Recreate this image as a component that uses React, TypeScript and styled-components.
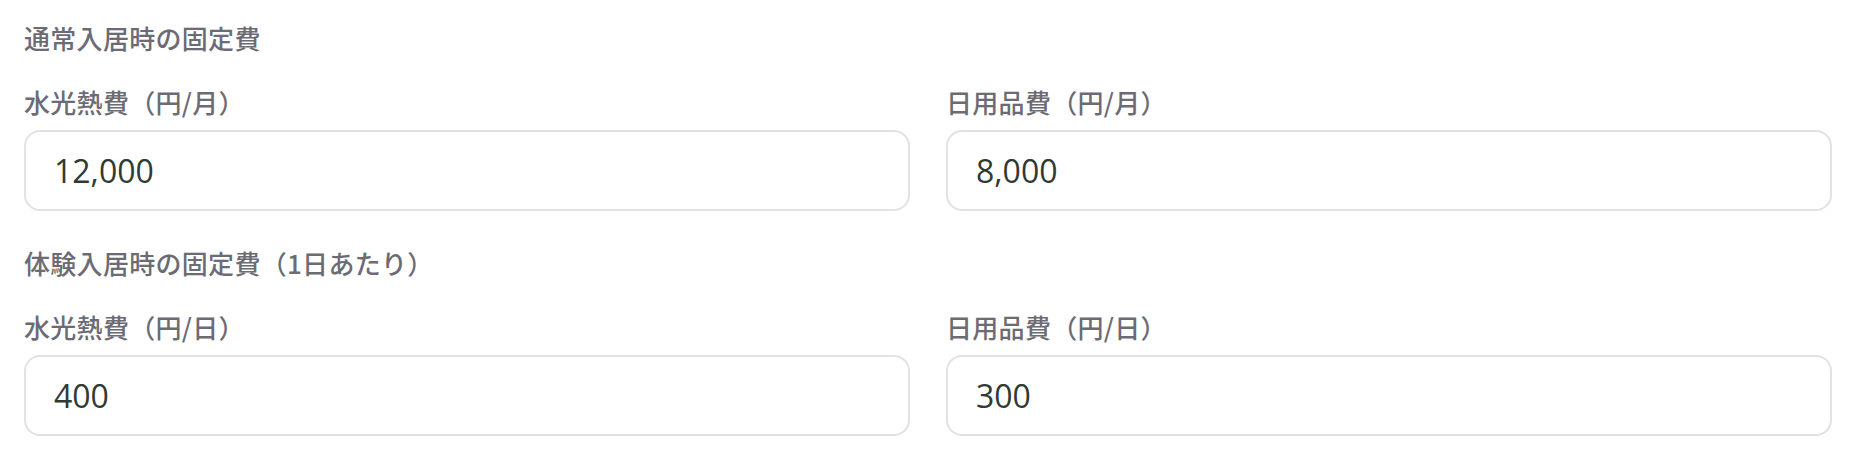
import React from 'react'
import styled, {createGlobalStyle} from 'styled-components'

const sections = [
    {
        title: '通常入居時の固定費',
        fields: [
            {label: '水光熱費（円/月）', value: '12,000'},
            {label: '日用品費（円/月）', value: '8,000'},
        ],
    },
    {
        title: '体験入居時の固定費（1日あたり）',
        fields: [
            {label: '水光熱費（円/日）', value: '400'},
            {label: '日用品費（円/日）', value: '300'},
        ],
    },
]

export default function App() {
    return (
        <>
            <GlobalL/>
            <PageL>
                {sections.map((s) => (
                    <SectionL key={s.title}>
                        <TitleL>{s.title}</TitleL>
                        <RowL>
                            {s.fields.map((f) => (
                                <FieldL key={f.label}>
                                    <LabelL>{f.label}</LabelL>
                                    <InputL type="text" defaultValue={f.value}/>
                                </FieldL>
                            ))}
                        </RowL>
                    </SectionL>
                ))}
            </PageL>
        </>
    )
}

// Styles
const GlobalL = createGlobalStyle`
  body {
    margin: 0;
    background: #ffffff;
    font-family: "Noto Sans CJK JP", "Noto Sans", sans-serif;
  }
`

const PageL = styled.div`
  display: flex;
  flex-direction: column;
  gap: 34px;
  padding: 20px 24px;
`

const SectionL = styled.section`
  display: flex;
  flex-direction: column;
`

const TitleL = styled.h2`
  margin: 0 0 28px;
  font-size: 26px;
  line-height: 36px;
  font-weight: 500;
  letter-spacing: 0.3px;
  color: #6c6b74;
`

const RowL = styled.div`
  display: grid;
  grid-template-columns: 1fr 1fr;
  gap: 36px;
`

const FieldL = styled.div`
  display: flex;
  flex-direction: column;
`

const LabelL = styled.label`
  margin-bottom: 10px;
  font-size: 26px;
  line-height: 36px;
  font-weight: 500;
  letter-spacing: 0.3px;
  color: #6c6b74;
`

const InputL = styled.input`
  box-sizing: border-box;
  width: 100%;
  height: 81px;
  padding: 0 28px;
  border: 2px solid #e2e2e2;
  border-radius: 16px;
  background: #fff;
  font-family: "Open Sans", "Noto Sans", sans-serif;
  font-size: 32px;
  color: #2f3a34;
  outline: none;
`
